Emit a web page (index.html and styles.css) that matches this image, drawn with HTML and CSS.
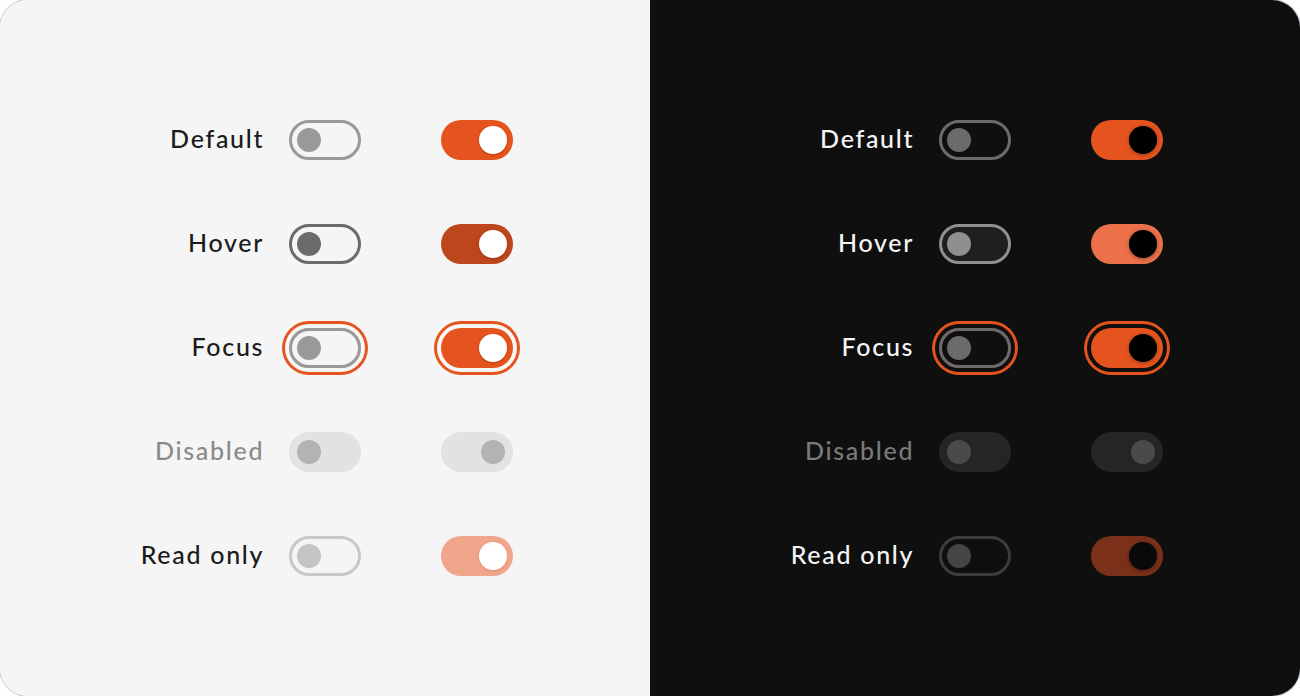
FILE: index.html
```html
<!DOCTYPE html>
<html lang="en">
<head>
<meta charset="utf-8">
<title>Toggle states</title>
<link rel="stylesheet" href="styles.css">
</head>
<body>
<div class="frame">
  <section class="panel light">
    <div class="grid">
      <div class="row">
        <span class="label">Default</span>
        <div class="pair">
          <span class="toggle off"><span class="knob"></span></span>
          <span class="toggle on"><span class="knob"></span></span>
        </div>
      </div>
      <div class="row">
        <span class="label">Hover</span>
        <div class="pair">
          <span class="toggle off hover"><span class="knob"></span></span>
          <span class="toggle on hover"><span class="knob"></span></span>
        </div>
      </div>
      <div class="row">
        <span class="label">Focus</span>
        <div class="pair">
          <span class="toggle off focus"><span class="knob"></span></span>
          <span class="toggle on focus"><span class="knob"></span></span>
        </div>
      </div>
      <div class="row">
        <span class="label muted">Disabled</span>
        <div class="pair">
          <span class="toggle off disabled"><span class="knob"></span></span>
          <span class="toggle on disabled"><span class="knob"></span></span>
        </div>
      </div>
      <div class="row">
        <span class="label">Read only</span>
        <div class="pair">
          <span class="toggle off readonly"><span class="knob"></span></span>
          <span class="toggle on readonly"><span class="knob"></span></span>
        </div>
      </div>
    </div>
  </section>
  <section class="panel dark">
    <div class="grid">
      <div class="row">
        <span class="label">Default</span>
        <div class="pair">
          <span class="toggle off"><span class="knob"></span></span>
          <span class="toggle on"><span class="knob"></span></span>
        </div>
      </div>
      <div class="row">
        <span class="label">Hover</span>
        <div class="pair">
          <span class="toggle off hover"><span class="knob"></span></span>
          <span class="toggle on hover"><span class="knob"></span></span>
        </div>
      </div>
      <div class="row">
        <span class="label">Focus</span>
        <div class="pair">
          <span class="toggle off focus"><span class="knob"></span></span>
          <span class="toggle on focus"><span class="knob"></span></span>
        </div>
      </div>
      <div class="row">
        <span class="label muted">Disabled</span>
        <div class="pair">
          <span class="toggle off disabled"><span class="knob"></span></span>
          <span class="toggle on disabled"><span class="knob"></span></span>
        </div>
      </div>
      <div class="row">
        <span class="label">Read only</span>
        <div class="pair">
          <span class="toggle off readonly"><span class="knob"></span></span>
          <span class="toggle on readonly"><span class="knob"></span></span>
        </div>
      </div>
    </div>
  </section>
</div>
</body>
</html>
```
FILE: styles.css
```css
* { box-sizing: border-box; }

html, body {
  margin: 0;
  padding: 0;
  background: #ffffff;
}

.frame {
  width: 1300px;
  height: 696px;
  display: flex;
  border-radius: 28px;
  overflow: hidden;
  box-shadow: 0 0 0 1px #c3ccd1;
  font-family: Lato, "Noto Sans", sans-serif;
}

.panel {
  flex: 1 1 0;
  display: flex;
  align-items: center;
  justify-content: center;
}

.grid {
  display: flex;
  flex-direction: column;
  gap: 64px;
}

.row {
  display: flex;
  align-items: center;
  gap: 26px;
}

.label {
  width: 126.7px;
  text-align: right;
  font-size: 25px;
  font-weight: 500;
  letter-spacing: 1.7px;
  margin-right: -1.7px;
  white-space: nowrap;
  line-height: 36px;
  margin-bottom: 4px;
}

.pair {
  display: flex;
  gap: 80px;
}

.toggle {
  position: relative;
  display: flex;
  align-items: center;
  width: 72px;
  height: 40px;
  border-radius: 20px;
  padding: 0 5px;
  border: 3px solid transparent;
}

.knob {
  display: block;
  width: 24px;
  height: 24px;
  border-radius: 50%;
}

.toggle.on {
  border: 0;
  padding: 0 6px;
  justify-content: flex-end;
}

.toggle.on .knob {
  width: 28px;
  height: 28px;
}

.toggle.disabled {
  border: 0;
  padding: 0 8px;
}

.toggle.on.disabled .knob {
  width: 24px;
  height: 24px;
}

/* ---------- light ---------- */
.light { background: #f5f5f5; color: #1b1b1b; }
.light .label.muted { color: #8a8a8a; }

.light .toggle.off { border-color: #999999; }
.light .toggle.off .knob { background: #999999; }
.light .toggle.on { background: #e5541f; }
.light .toggle.on .knob { background: #ffffff; box-shadow: 0 1px 3px rgba(80, 20, 0, 0.3); }

.light .toggle.off.hover { border-color: #6b6b6b; }
.light .toggle.off.hover .knob { background: #6b6b6b; }
.light .toggle.on.hover { background: #bd461c; }

.light .toggle.focus { box-shadow: 0 0 0 4px #f7f7f7, 0 0 0 7px #e5541f; }

.light .toggle.disabled { background: #e2e2e2; border: 0; }
.light .toggle.disabled .knob { background: #b3b3b3; box-shadow: none; }

.light .toggle.off.readonly { border-color: #c8c8c8; }
.light .toggle.off.readonly .knob { background: #c4c4c4; }
.light .toggle.on.readonly { background: #efa68b; }
.light .toggle.on.readonly .knob { box-shadow: 0 1px 3px rgba(120, 40, 0, 0.15); }

/* ---------- dark ---------- */
.dark { background: #0f0f0f; color: #f5f5f5; }
.dark .label.muted { color: #7a7a7a; }

.dark .toggle.off { border-color: #6b6b6b; }
.dark .toggle.off .knob { background: #6b6b6b; }
.dark .toggle.on { background: #e5541f; }
.dark .toggle.on .knob { background: #000000; box-shadow: 0 1px 4px rgba(0, 0, 0, 0.35); }

.dark .toggle.off.hover { border-color: #8f8f8f; background: #1e1e1e; }
.dark .toggle.off.hover .knob { background: #8f8f8f; }
.dark .toggle.on.hover { background: #ec714a; }

.dark .toggle.focus { box-shadow: 0 0 0 4px #0f0f0f, 0 0 0 7px #e5541f; }

.dark .toggle.disabled { background: #252525; border: 0; }
.dark .toggle.disabled .knob { background: #4a4a4a; box-shadow: none; }

.dark .toggle.off.readonly { border-color: #3c3c3c; }
.dark .toggle.off.readonly .knob { background: #454545; }
.dark .toggle.on.readonly { background: #7a3019; }
.dark .toggle.on.readonly .knob { background: #0a0a0a; }
```
